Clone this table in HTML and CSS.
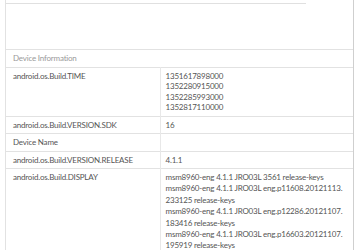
FILE: index.html
```html
<!DOCTYPE html>
<html>
<head>
<meta charset="utf-8">
<link rel="stylesheet" href="styles.css">
</head>
<body>
<div class="panel">
  <div class="topbox"></div>
  <table class="info">
    <colgroup><col class="c1"><col class="c2"></colgroup>
    <tr class="head"><td colspan="2">Device Information</td></tr>
    <tr><td class="k">android.os.Build.TIME</td><td class="v">1351617898000<br>1352280915000<br>1352285993000<br>1352817110000</td></tr>
    <tr><td class="k">android.os.Build.VERSION.SDK</td><td class="v">16</td></tr>
    <tr><td class="k">Device Name</td><td class="v"></td></tr>
    <tr><td class="k">android.os.Build.VERSION.RELEASE</td><td class="v">4.1.1</td></tr>
    <tr class="display"><td class="k">android.os.Build.DISPLAY</td><td class="v">msm8960-eng 4.1.1 JRO03L 3561 release-keys<br>msm8960-eng 4.1.1 JRO03L eng.p11608.20121113.<br>233125 release-keys<br>msm8960-eng 4.1.1 JRO03L eng.p12286.20121107.<br>183416 release-keys<br>msm8960-eng 4.1.1 JRO03L eng.p16603.20121107.<br>195919 release-keys</td></tr>
  </table>
</div>
</body>
</html>
```
FILE: styles.css
```css
html, body {
  margin: 0;
  padding: 0;
  background: #fff;
}
body {
  font-family: Lato, "Open Sans", sans-serif;
  font-size: 8px;
  letter-spacing: -0.2px;
  color: #555;
  height: 250px;
  overflow: hidden;
}
.panel {
  margin-left: 5px;
  width: 347px;
  border-left: 1px solid #e2e2e2;
  border-right: 1px solid #cfcfcf;
  padding-top: 3px;
  height: 300px;
}
.topbox {
  width: 300px;
  height: 45px;
  border-top: 1px solid #e0e0e0;
}
.info {
  width: 100%;
  border-collapse: collapse;
  table-layout: fixed;
}
.c1 {
  width: 154px;
}
.info td {
  border-top: 1px solid #e2e2e2;
  padding: 3px 0 3px 0;
  line-height: 10.5px;
  vertical-align: top;
  white-space: nowrap;
}
.head td {
  color: #9a9a9a;
  padding-left: 7px;
}
.k {
  padding-left: 7px !important;
  border-right: 1px solid #e8e8e8;
}
.v {
  padding-left: 5px !important;
}
.display td {
  line-height: 11.4px;
}
```
